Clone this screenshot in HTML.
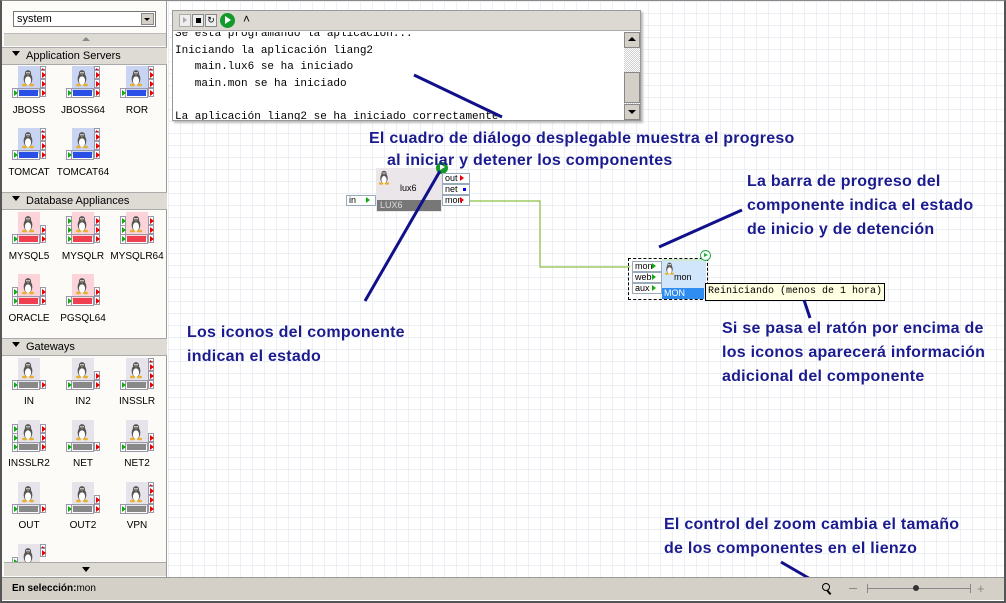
<!DOCTYPE html>
<html><head><meta charset="utf-8"><style>
*{margin:0;padding:0;box-sizing:border-box}
body{width:1006px;height:603px;overflow:hidden;background:#fff;font-family:"Liberation Sans",sans-serif;position:relative}
.a{position:absolute}
#frame{left:0;top:0;width:1006px;height:603px;border:2px solid #555;border-top:1px solid #888}
#side{left:2px;top:1px;width:165px;height:576px;background:#fdfbf7;border-right:1px solid #999}
.hdr{position:absolute;left:2px;width:165px;height:18px;background:#dedbd5;border-top:1px solid #aaa;border-bottom:1px solid #aaa;font-size:11px;line-height:16px;padding-left:10px;color:#000}
.hdr:before{content:"";display:inline-block;border:4px solid transparent;border-top:5px solid #000;margin-right:6px;vertical-align:-1px}
.lbl{position:absolute;font-size:10px;color:#000;text-align:center;width:56px}
.ic{position:absolute;width:34px;height:33px}
.ic .bd{position:absolute;left:6px;top:0;width:22px;height:26px}
.ic .bar{position:absolute;left:5px;top:22px;width:23px;height:10px;border:1px solid #99a;padding:1px}
.ic .bar i{display:block;width:100%;height:100%}
.ic .lp{position:absolute;left:0;top:22px;width:6px;height:10px;background:#fff;border:1px solid #99a}
.ic .lp:after{content:"";position:absolute;left:1px;top:1px;border:3px solid transparent;border-left:4px solid #1a1}
.rp{position:absolute;left:28px;width:6px;height:9px;background:#fff;border:1px solid #99a}
.rp:after{content:"";position:absolute;left:1px;top:1px;border:3px solid transparent;border-left:4px solid #e00}
.b .bd{background:#c9d3f2}.b .bar i{background:#2a4fe6}
.r .bd{background:#fbd3d8}.r .bar i{background:#f04050}
.g .bd{background:#e6e3ea}.g .bar i{background:#888}
.ic svg{position:absolute;left:9px;top:3px}
#canvas{left:168px;top:1px;width:836px;height:576px;background-color:#fff;background-image:linear-gradient(#eceff3 1px,transparent 1px),linear-gradient(90deg,#eceff3 1px,transparent 1px);background-size:12px 12px}
#status{left:2px;top:577px;width:1002px;height:23px;background:#d4d0c8;border-top:1px solid #999;font-size:10px;line-height:22px;padding-left:10px}
.note{position:absolute;color:#1b1b8f;font-weight:bold;font-size:16px;letter-spacing:0.25px;line-height:24px;font-family:"Liberation Sans",sans-serif;white-space:nowrap}
.mono{font-family:"Liberation Mono",monospace;font-size:11px}
.port{position:absolute;height:11px;border:1px solid #9ab;background:#fff;font-size:9px;line-height:9px;padding-left:2px}
.port.o:after{content:"";position:absolute;right:2px;top:1px;border:3px solid transparent;border-left:4px solid #e00}
.port.i:after{content:"";position:absolute;right:2px;top:1px;border:3px solid transparent;border-left:4px solid #1a1}
</style></head><body>
<svg width="0" height="0" style="position:absolute"><defs><symbol id="tux" viewBox="0 0 16 20"><ellipse cx="8" cy="11" rx="5" ry="7" fill="#555"/><ellipse cx="8" cy="13" rx="3.5" ry="5" fill="#fff"/><circle cx="8" cy="4.5" r="3.5" fill="#555"/><circle cx="6.8" cy="4" r=".9" fill="#fff"/><circle cx="9.2" cy="4" r=".9" fill="#fff"/><path d="M6.5 6l1.5 1 1.5-1z" fill="#e8b030"/><ellipse cx="4" cy="18" rx="3" ry="1.6" fill="#e8b030"/><ellipse cx="12" cy="18" rx="3" ry="1.6" fill="#e8b030"/></symbol></defs></svg>

<div id="canvas" class="a"></div>
<div id="side" class="a"></div>
<div class="a" style="left:13px;top:11px;width:143px;height:16px;border:1px solid #777;background:#fff;font-size:11px;line-height:14px;padding-left:3px">system<div class="a" style="right:1px;top:1px;width:13px;height:12px;background:#d4d0c8;border:1px solid #888"><div class="a" style="left:2px;top:4px;border:3px solid transparent;border-top:3px solid #000"></div></div></div>
<div class="a" style="left:4px;top:33px;width:162px;height:13px;background:#dedbd5;border-top:1px solid #bbb"><div class="a" style="left:78px;top:3px;border:4px solid transparent;border-bottom:4px solid #888;border-top:0"></div></div>
<div class="hdr" style="top:47px">Application Servers</div>
<div class="hdr" style="top:192px">Database Appliances</div>
<div class="hdr" style="top:338px">Gateways</div>
<div class="a" style="left:4px;top:562px;width:162px;height:14px;background:#dedbd5;border-top:1px solid #aaa"><div class="a" style="left:78px;top:4px;border:4px solid transparent;border-top:5px solid #000;border-bottom:0"></div></div>

<!-- App servers -->
<div class="ic b" style="left:12px;top:66px"><i class="bd"></i><svg width="14" height="18"><use href="#tux"/></svg><i class="bar"><i></i></i><i class="lp"></i><i class="rp" style="top:0;height:4px"></i><i class="rp" style="top:4px"></i><i class="rp" style="top:13px"></i><i class="rp" style="top:22px"></i></div>
<div class="ic b" style="left:66px;top:66px"><i class="bd"></i><svg width="14" height="18"><use href="#tux"/></svg><i class="bar"><i></i></i><i class="lp"></i><i class="rp" style="top:0;height:4px"></i><i class="rp" style="top:4px"></i><i class="rp" style="top:13px"></i><i class="rp" style="top:22px"></i></div>
<div class="ic b" style="left:120px;top:66px"><i class="bd"></i><svg width="14" height="18"><use href="#tux"/></svg><i class="bar"><i></i></i><i class="lp"></i><i class="rp" style="top:0;height:4px"></i><i class="rp" style="top:4px"></i><i class="rp" style="top:13px"></i><i class="rp" style="top:22px"></i></div>
<div class="ic b" style="left:12px;top:128px"><i class="bd"></i><svg width="14" height="18"><use href="#tux"/></svg><i class="bar"><i></i></i><i class="lp"></i><i class="rp" style="top:0;height:4px"></i><i class="rp" style="top:4px"></i><i class="rp" style="top:13px"></i><i class="rp" style="top:22px"></i></div>
<div class="ic b" style="left:66px;top:128px"><i class="bd"></i><svg width="14" height="18"><use href="#tux"/></svg><i class="bar"><i></i></i><i class="lp"></i><i class="rp" style="top:0;height:4px"></i><i class="rp" style="top:4px"></i><i class="rp" style="top:13px"></i><i class="rp" style="top:22px"></i></div>
<div class="lbl" style="left:1px;top:105px">JBOSS</div><div class="lbl" style="left:55px;top:105px">JBOSS64</div><div class="lbl" style="left:109px;top:105px">ROR</div>
<div class="lbl" style="left:1px;top:167px">TOMCAT</div><div class="lbl" style="left:55px;top:167px">TOMCAT64</div>

<!-- DB -->
<div class="ic r" style="left:12px;top:212px"><i class="bd"></i><svg width="14" height="18"><use href="#tux"/></svg><i class="bar"><i></i></i><i class="lp"></i><i class="rp" style="top:13px"></i><i class="rp" style="top:22px"></i></div>
<div class="ic r" style="left:66px;top:212px"><i class="bd"></i><svg width="14" height="18"><use href="#tux"/></svg><i class="bar"><i></i></i><i class="lp"></i><i class="lp" style="top:4px"></i><i class="lp" style="top:13px"></i><i class="rp" style="top:4px"></i><i class="rp" style="top:13px"></i><i class="rp" style="top:22px"></i></div>
<div class="ic r" style="left:120px;top:212px"><i class="bd"></i><svg width="14" height="18"><use href="#tux"/></svg><i class="bar"><i></i></i><i class="lp"></i><i class="lp" style="top:4px"></i><i class="lp" style="top:13px"></i><i class="rp" style="top:4px"></i><i class="rp" style="top:13px"></i><i class="rp" style="top:22px"></i></div>
<div class="ic r" style="left:12px;top:274px"><i class="bd"></i><svg width="14" height="18"><use href="#tux"/></svg><i class="bar"><i></i></i><i class="lp"></i><i class="lp" style="top:13px"></i><i class="rp" style="top:13px"></i><i class="rp" style="top:22px"></i></div>
<div class="ic r" style="left:66px;top:274px"><i class="bd"></i><svg width="14" height="18"><use href="#tux"/></svg><i class="bar"><i></i></i><i class="lp"></i><i class="rp" style="top:13px"></i><i class="rp" style="top:22px"></i></div>
<div class="lbl" style="left:1px;top:251px">MYSQL5</div><div class="lbl" style="left:55px;top:251px">MYSQLR</div><div class="lbl" style="left:109px;top:251px">MYSQLR64</div>
<div class="lbl" style="left:1px;top:313px">ORACLE</div><div class="lbl" style="left:55px;top:313px">PGSQL64</div>

<!-- Gateways -->
<div class="ic g" style="left:12px;top:358px"><i class="bd"></i><svg width="14" height="18"><use href="#tux"/></svg><i class="bar"><i></i></i><i class="lp"></i><i class="rp" style="top:22px"></i></div>
<div class="ic g" style="left:66px;top:358px"><i class="bd"></i><svg width="14" height="18"><use href="#tux"/></svg><i class="bar"><i></i></i><i class="lp"></i><i class="rp" style="top:13px"></i><i class="rp" style="top:22px"></i></div>
<div class="ic g" style="left:120px;top:358px"><i class="bd"></i><svg width="14" height="18"><use href="#tux"/></svg><i class="bar"><i></i></i><i class="lp"></i><i class="rp" style="top:0;height:4px"></i><i class="rp" style="top:4px"></i><i class="rp" style="top:13px"></i><i class="rp" style="top:22px"></i></div>
<div class="ic g" style="left:12px;top:420px"><i class="bd"></i><svg width="14" height="18"><use href="#tux"/></svg><i class="bar"><i></i></i><i class="lp"></i><i class="lp" style="top:4px"></i><i class="lp" style="top:13px"></i><i class="rp" style="top:4px"></i><i class="rp" style="top:13px"></i><i class="rp" style="top:22px"></i></div>
<div class="ic g" style="left:66px;top:420px"><i class="bd"></i><svg width="14" height="18"><use href="#tux"/></svg><i class="bar"><i></i></i><i class="lp"></i><i class="rp" style="top:22px"></i></div>
<div class="ic g" style="left:120px;top:420px"><i class="bd"></i><svg width="14" height="18"><use href="#tux"/></svg><i class="bar"><i></i></i><i class="lp"></i><i class="rp" style="top:13px"></i><i class="rp" style="top:22px"></i></div>
<div class="ic g" style="left:12px;top:482px"><i class="bd"></i><svg width="14" height="18"><use href="#tux"/></svg><i class="bar"><i></i></i><i class="lp"></i><i class="rp" style="top:22px"></i></div>
<div class="ic g" style="left:66px;top:482px"><i class="bd"></i><svg width="14" height="18"><use href="#tux"/></svg><i class="bar"><i></i></i><i class="lp"></i><i class="rp" style="top:13px"></i><i class="rp" style="top:22px"></i></div>
<div class="ic g" style="left:120px;top:482px"><i class="bd"></i><svg width="14" height="18"><use href="#tux"/></svg><i class="bar"><i></i></i><i class="lp"></i><i class="rp" style="top:0;height:4px"></i><i class="rp" style="top:4px"></i><i class="rp" style="top:13px"></i><i class="rp" style="top:22px"></i></div>
<div class="ic g" style="left:12px;top:544px;height:18px;overflow:hidden"><i class="bd"></i><svg width="14" height="18"><use href="#tux"/></svg><i class="lp" style="top:13px"></i><i class="rp" style="top:0;height:4px"></i><i class="rp" style="top:4px"></i></div>
<div class="lbl" style="left:1px;top:396px">IN</div><div class="lbl" style="left:55px;top:396px">IN2</div><div class="lbl" style="left:109px;top:396px">INSSLR</div>
<div class="lbl" style="left:1px;top:458px">INSSLR2</div><div class="lbl" style="left:55px;top:458px">NET</div><div class="lbl" style="left:109px;top:458px">NET2</div>
<div class="lbl" style="left:1px;top:520px">OUT</div><div class="lbl" style="left:55px;top:520px">OUT2</div><div class="lbl" style="left:109px;top:520px">VPN</div>

<!-- console -->
<div class="a" style="left:172px;top:10px;width:469px;height:111px;border:1px solid #999;background:#fff;box-shadow:2px 2px 2px #bbb">
 <div class="a" style="left:0;top:0;width:467px;height:20px;background:#dcd9d2;border-bottom:1px solid #aaa">
  <div class="a" style="left:6px;top:3px;width:12px;height:13px;border:1px solid #aaa;background:#eee"><div class="a" style="left:3px;top:2px;border:3px solid transparent;border-left:4px solid #aaa"></div></div>
  <div class="a" style="left:19px;top:3px;width:12px;height:13px;border:1px solid #888;background:#eee"><div class="a" style="left:3px;top:3px;width:5px;height:5px;background:#000"></div></div>
  <div class="a" style="left:32px;top:3px;width:12px;height:13px;border:1px solid #888;background:#eee;font-size:9px;line-height:11px;text-align:center">&#x21bb;</div>
  <div class="a" style="left:47px;top:2px;width:15px;height:15px;border-radius:50%;background:#139a2a"><div class="a" style="left:5px;top:3px;border:4px solid transparent;border-left:6px solid #fff"></div></div>
  <div class="a" style="left:70px;top:1px;font-size:12px">&#x2c4;</div>
 </div>
 <div class="a mono" style="left:2px;top:21px;width:448px;height:88px;overflow:hidden;line-height:16.5px;white-space:pre"><div style="margin-top:-6px">Se está programando la aplicación...
Iniciando la aplicación liang2
   main.lux6 se ha iniciado
   main.mon se ha iniciado

La aplicación liang2 se ha iniciado correctamente</div></div>
 <div class="a" style="left:451px;top:21px;width:16px;height:88px;background:repeating-conic-gradient(#ccc 0 25%,#fff 0 50%) 0 0/2px 2px">
  <div class="a" style="left:0;top:0;width:16px;height:16px;background:#d4d0c8;border:1px solid #888"><div class="a" style="left:3px;top:4px;border:4px solid transparent;border-bottom:4px solid #000;border-top:0"></div></div>
  <div class="a" style="left:0;top:40px;width:16px;height:31px;background:#d4d0c8;border:1px solid #888"></div>
  <div class="a" style="left:0;top:72px;width:16px;height:16px;background:#d4d0c8;border:1px solid #888"><div class="a" style="left:3px;top:5px;border:4px solid transparent;border-top:4px solid #000;border-bottom:0"></div></div>
 </div>
</div>

<!-- lux6 component -->
<div class="a" style="left:376px;top:168px;width:66px;height:44px;background:#ebe6ea"></div>
<svg class="a" style="left:378px;top:170px" width="12" height="15"><use href="#tux"/></svg>
<div class="a" style="left:400px;top:183px;font-size:9px">lux6</div>
<div class="a" style="left:377px;top:200px;width:64px;height:11px;background:#777;color:#ddd;font-size:9px;line-height:11px;padding-left:3px">LUX6</div>
<div class="a" style="left:436px;top:162px;width:12px;height:12px;border-radius:50%;background:#139a2a"><div class="a" style="left:4px;top:2px;border:3px solid transparent;border-left:5px solid #fff"></div></div>
<div class="port o" style="left:442px;top:173px;width:28px">out</div>
<div class="port" style="left:442px;top:184px;width:28px">net<i class="a" style="right:3px;top:3px;width:3px;height:3px;background:#00f"></i></div>
<div class="port o" style="left:442px;top:195px;width:28px">mon</div>
<div class="port i" style="left:346px;top:195px;width:30px">in</div>
<svg class="a" style="left:0;top:0" width="1006" height="603"><path d="M470 201H540V267H630" fill="none" stroke="#8cc040" stroke-width="1.2"/></svg>

<!-- mon component -->
<div class="a" style="left:628px;top:258px;width:80px;height:42px;border:1px dashed #000"></div>
<div class="a" style="left:662px;top:261px;width:44px;height:38px;background:#d2e6fb"></div>
<div class="a" style="left:662px;top:259px;width:40px;height:2px;background:#cfe8cf"></div>
<svg class="a" style="left:664px;top:262px" width="11" height="13"><use href="#tux"/></svg>
<div class="a" style="left:674px;top:272px;font-size:9px">mon</div>
<div class="a" style="left:662px;top:288px;width:42px;height:11px;background:#2f8cf0;color:#fff;font-size:9px;line-height:11px;padding-left:2px">MON</div>
<div class="a" style="left:700px;top:250px;width:11px;height:11px;border-radius:50%;border:1.5px solid #2a4;background:#fff"><div class="a" style="left:3px;top:1.5px;border:2.5px solid transparent;border-left:4px solid #2a4"></div></div>
<div class="port i" style="left:632px;top:261px;width:30px">mon</div>
<div class="port i" style="left:632px;top:272px;width:30px">web</div>
<div class="port i" style="left:632px;top:283px;width:30px">aux</div>
<div class="a mono" style="left:705px;top:283px;width:180px;height:18px;background:#ffffe1;border:1px solid #000;font-size:10px;line-height:16px;padding-left:2px;white-space:nowrap">Reiniciando (menos de 1 hora)</div>

<!-- notes -->
<div class="note" style="left:369px;top:127px">El cuadro de diálogo desplegable muestra el progreso</div>
<div class="note" style="left:387px;top:149px">al iniciar y detener los componentes</div>
<div class="note" style="left:747px;top:170px">La barra de progreso del<br>componente indica el estado<br>de inicio y de detención</div>
<div class="note" style="left:187px;top:321px">Los iconos del componente<br>indican el estado</div>
<div class="note" style="left:722px;top:317px">Si se pasa el ratón por encima de<br>los iconos aparecerá información<br>adicional del componente</div>
<div class="note" style="left:664px;top:513px">El control del zoom cambia el tamaño<br>de los componentes en el lienzo</div>
<svg class="a" style="left:0;top:0" width="1006" height="603"><g stroke="#10108a" stroke-width="3"><path d="M414 75L502 117"/><path d="M365 301L440 171"/><path d="M659 247L742 210"/><path d="M804 300L810 318"/><path d="M781 562L812 580"/></g></svg>

<!-- status -->
<div id="status" class="a"><b>En selección:</b>mon
 <div class="a" style="left:820px;top:5px;width:8px;height:8px;border:1.5px solid #000;border-radius:50%"></div><div class="a" style="left:826px;top:12px;width:2px;height:5px;background:#000;transform:rotate(-40deg)"></div>
 <div class="a" style="left:847px;top:10px;width:8px;height:1px;background:#888"></div>
 <div class="a" style="left:865px;top:10px;width:104px;height:1px;background:#888"></div>
 <div class="a" style="left:865px;top:6px;width:1px;height:9px;background:#888"></div><div class="a" style="left:968px;top:6px;width:1px;height:9px;background:#888"></div>
 <div class="a" style="left:911px;top:7px;width:6px;height:6px;background:#333;border-radius:50%"></div>
 <div class="a" style="left:975px;top:0;color:#888;font-size:13px">+</div>
</div>
<div id="frame" class="a"></div>
</body></html>
